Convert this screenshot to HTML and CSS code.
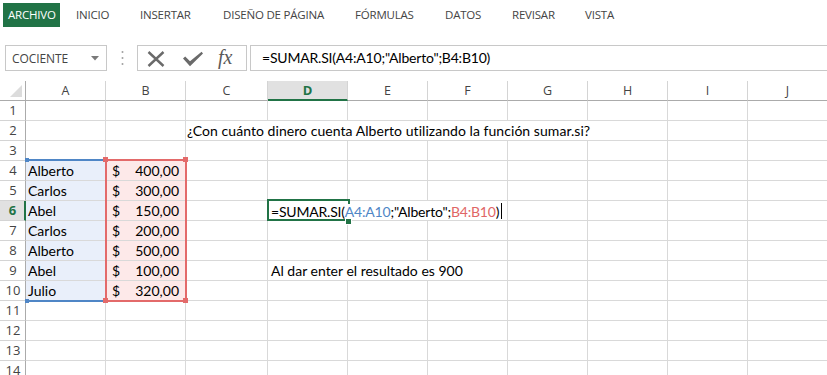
FILE: index.html
```html
<!DOCTYPE html>
<html lang="es">
<head>
<meta charset="utf-8">
<title>Excel - SUMAR.SI</title>
<link rel="stylesheet" href="styles.css">
</head>
<body>
<div class="tabs">
  <span class="tab"><span class="active">ARCHIVO</span></span>
  <span class="tab">INICIO</span>
  <span class="tab">INSERTAR</span>
  <span class="tab">DISEÑO DE PÁGINA</span>
  <span class="tab">FÓRMULAS</span>
  <span class="tab">DATOS</span>
  <span class="tab">REVISAR</span>
  <span class="tab">VISTA</span>
</div>

<div class="fbar">
  <div class="namebox">
    <span>COCIENTE</span>
    <svg class="dd" width="8" height="5" viewBox="0 0 8 5"><path d="M0 0H8L4 4.5Z" fill="#7a7a7a"/></svg>
  </div>
  <div class="sep">
    <svg width="3" height="16" viewBox="0 0 3 16"><circle cx="1.5" cy="2" r="1" fill="#a0a0a0"/><circle cx="1.5" cy="8" r="1" fill="#a0a0a0"/><circle cx="1.5" cy="14" r="1" fill="#a0a0a0"/></svg>
  </div>
  <div class="fxbtns">
    <svg class="ico-x" width="18" height="16" viewBox="0 0 18 16"><path d="M1.5 1L16.5 15M16.5 1L1.5 15" stroke="#6a6a6a" stroke-width="2.4" fill="none"/></svg>
    <svg class="ico-ok" width="22" height="16" viewBox="0 0 22 16"><path d="M1 7.5L3.2 5.6L8 10.2L19.6 0.8L21 2.4L8 15.2Z" fill="#6a6a6a"/></svg>
    <span class="fx">fx</span>
  </div>
  <div class="finput">=SUMAR.SI(A4:A10;"Alberto";B4:B10)</div>
</div>

<div class="sheet">
  <div class="c corner"><svg width="12" height="12" viewBox="0 0 12 12"><path d="M12 0V12H0Z" fill="#dcdcdc"/></svg></div>
  <div class="c ch">A</div>
  <div class="c ch">B</div>
  <div class="c ch">C</div>
  <div class="c ch sel">D</div>
  <div class="c ch">E</div>
  <div class="c ch">F</div>
  <div class="c ch">G</div>
  <div class="c ch">H</div>
  <div class="c ch">I</div>
  <div class="c ch">J</div>

  <div class="c rh">1</div>
  <div class="c"></div><div class="c"></div><div class="c"></div><div class="c"></div><div class="c"></div><div class="c"></div><div class="c"></div><div class="c"></div><div class="c"></div><div class="c"></div>

  <div class="c rh">2</div>
  <div class="c"></div><div class="c"></div>
  <div class="c t span6 q">¿Con cuánto dinero cuenta Alberto utilizando la función sumar.si?</div>
  <div class="c"></div><div class="c"></div>

  <div class="c rh">3</div>
  <div class="c"></div><div class="c"></div><div class="c"></div><div class="c"></div><div class="c"></div><div class="c"></div><div class="c"></div><div class="c"></div><div class="c"></div><div class="c"></div>

  <div class="c rh">4</div>
  <div class="c t a">Alberto</div>
  <div class="c b"><span>$</span><span>400,00</span></div>
  <div class="c"></div><div class="c"></div><div class="c"></div><div class="c"></div><div class="c"></div><div class="c"></div><div class="c"></div><div class="c"></div>

  <div class="c rh">5</div>
  <div class="c t a">Carlos</div>
  <div class="c b"><span>$</span><span>300,00</span></div>
  <div class="c"></div><div class="c"></div><div class="c"></div><div class="c"></div><div class="c"></div><div class="c"></div><div class="c"></div><div class="c"></div>

  <div class="c rh sel">6</div>
  <div class="c t a">Abel</div>
  <div class="c b"><span>$</span><span>150,00</span></div>
  <div class="c"></div>
  <div class="c span3 edit"><span class="etext">=SUMAR.SI(<span class="rb">A4:A10</span>;"Alberto";<span class="rr">B4:B10</span>)</span><span class="caret"></span></div>
  <div class="c"></div><div class="c"></div><div class="c"></div><div class="c"></div>

  <div class="c rh">7</div>
  <div class="c t a">Carlos</div>
  <div class="c b"><span>$</span><span>200,00</span></div>
  <div class="c"></div><div class="c"></div><div class="c"></div><div class="c"></div><div class="c"></div><div class="c"></div><div class="c"></div><div class="c"></div>

  <div class="c rh">8</div>
  <div class="c t a">Alberto</div>
  <div class="c b"><span>$</span><span>500,00</span></div>
  <div class="c"></div><div class="c"></div><div class="c"></div><div class="c"></div><div class="c"></div><div class="c"></div><div class="c"></div><div class="c"></div>

  <div class="c rh">9</div>
  <div class="c t a">Abel</div>
  <div class="c b"><span>$</span><span>100,00</span></div>
  <div class="c"></div>
  <div class="c t span3 r9">Al dar enter el resultado es 900</div>
  <div class="c"></div><div class="c"></div><div class="c"></div><div class="c"></div>

  <div class="c rh">10</div>
  <div class="c t a">Julio</div>
  <div class="c b"><span>$</span><span>320,00</span></div>
  <div class="c"></div><div class="c"></div><div class="c"></div><div class="c"></div><div class="c"></div><div class="c"></div><div class="c"></div><div class="c"></div>

  <div class="c rh">11</div>
  <div class="c"></div><div class="c"></div><div class="c"></div><div class="c"></div><div class="c"></div><div class="c"></div><div class="c"></div><div class="c"></div><div class="c"></div><div class="c"></div>

  <div class="c rh">12</div>
  <div class="c"></div><div class="c"></div><div class="c"></div><div class="c"></div><div class="c"></div><div class="c"></div><div class="c"></div><div class="c"></div><div class="c"></div><div class="c"></div>

  <div class="c rh">13</div>
  <div class="c"></div><div class="c"></div><div class="c"></div><div class="c"></div><div class="c"></div><div class="c"></div><div class="c"></div><div class="c"></div><div class="c"></div><div class="c"></div>

  <div class="c rh">14</div>
  <div class="c"></div><div class="c"></div><div class="c"></div><div class="c"></div><div class="c"></div><div class="c"></div><div class="c"></div><div class="c"></div><div class="c"></div><div class="c"></div>

  <div class="range-a"></div>
  <div class="hb hb-a1"></div>
  <div class="hb hb-a2"></div>
  <div class="range-b"></div>
  <div class="hr hr1"></div>
  <div class="hr hr2"></div>
  <div class="hr hr3"></div>
  <div class="hr hr4"></div>
  <div class="cursel"></div>
  <div class="fill"></div>
</div>
</body>
</html>
```

FILE: styles.css
```css
* { box-sizing: border-box; }
html, body { margin: 0; padding: 0; background: #fff; }
body {
  width: 827px;
  height: 375px;
  overflow: hidden;
  font-family: "Open Sans", "Noto Sans", sans-serif;
  color: #444;
}

/* ribbon tabs */
.tabs {
  display: grid;
  grid-template-columns: 68px 64px 83px 132px 90px 67px 73px 60px;
  padding: 3px 0 0 3px;
  height: 27px;
  font-size: 11.5px;
  align-items: center;
}
.tab {
  padding-left: 5px;
  line-height: 24px;
  white-space: nowrap;
  letter-spacing: -0.2px;
}
.tab:first-child { padding-left: 0; }
.active {
  display: inline-block;
  background: #217346;
  color: #fff;
  padding: 0 4px 0 5px;
  height: 24px;
  line-height: 24px;
}

/* formula bar */
.fbar {
  display: flex;
  margin-top: 18px;
  height: 26px;
}
.namebox {
  margin-left: 5px;
  width: 102px;
  border: 1px solid #c8c8c8;
  display: flex;
  align-items: center;
  justify-content: space-between;
  padding: 0 7px 0 6px;
  font-size: 12px;
  letter-spacing: -0.1px;
}
.dd { margin-top: 1px; }
.sep {
  width: 30px;
  display: flex;
  align-items: center;
  justify-content: center;
}
.fxbtns {
  width: 110px;
  border: 1px solid #c8c8c8;
  display: flex;
  align-items: center;
  padding: 0 0 0 9px;
}
.ico-x { margin-top: 1px; }
.ico-ok { margin-left: 17px; margin-top: 1px; }
.fx {
  margin-left: 14px;
  font-family: "Liberation Serif", "DejaVu Serif", serif;
  font-style: italic;
  font-size: 20px;
  color: #5a5a5a;
  line-height: 20px;
  margin-top: -2px;
}
.finput {
  flex: 1;
  margin-left: 3px;
  border-top: 1px solid #c8c8c8;
  border-bottom: 1px solid #c8c8c8;
  border-left: 1px solid #c8c8c8;
  padding-left: 11px;
  font-family: "Lato", "Liberation Sans", sans-serif;
  font-size: 14px;
  letter-spacing: -0.2px;
  line-height: 24px;
  color: #000;
  white-space: nowrap;
}

/* sheet grid */
.sheet {
  position: relative;
  margin-top: 10px;
  display: grid;
  grid-template-columns: 26px 80px 80px 82px 80px 80px 80px 80px 80px 80px 80px;
  grid-auto-rows: 20px;
  width: 828px;
  font-family: "Lato", "Liberation Sans", sans-serif;
  font-size: 14px;
  color: #000;
}
.c {
  border-right: 1px solid #d9d9d9;
  border-bottom: 1px solid #d9d9d9;
  line-height: 19px;
  white-space: nowrap;
  min-width: 0;
}
.corner {
  border-right: 1px solid #ababab;
  border-bottom: 1px solid #ababab;
  display: flex;
  align-items: flex-end;
  justify-content: flex-end;
  padding: 0 3px 3px 0;
}
.ch {
  border-bottom: 1px solid #ababab;
  border-right: 1px solid #d4d4d4;
  text-align: center;
  font-family: "Open Sans", "Noto Sans", sans-serif;
  font-size: 12.5px;
  color: #444;
  line-height: 19px;
}
.ch.sel {
  background: #e1e1e1;
  color: #217346;
  font-weight: bold;
  font-size: 13px;
  border-bottom: 2px solid #217346;
}
.rh {
  border-right: 1px solid #ababab;
  border-bottom: 1px solid #d4d4d4;
  text-align: center;
  font-family: "Open Sans", "Noto Sans", sans-serif;
  font-size: 13px;
  color: #444;
  padding-left: 1px;
}
.rh.sel {
  background: #e1e1e1;
  color: #217346;
  font-weight: bold;
  border-right: 2px solid #217346;
}
.t { padding-left: 2px; }
.q { padding-left: 1px; letter-spacing: 0.05px; }
.a { background: #e9effa; }
.b {
  background: #fde9e9;
  display: flex;
  justify-content: space-between;
  padding: 0 6px 0 6px;
}
.span6 { grid-column: span 6; }
.span3 { grid-column: span 3; }
.edit {
  position: relative;
  padding-left: 3px;
  display: flex;
  align-items: center;
}
.etext {
  position: relative;
  z-index: 3;
  background: #fff;
  line-height: 15px;
  margin-top: 1px;
  letter-spacing: -0.2px;
}
.rb { color: #4f86c6; }
.rr { color: #e06666; }
.caret {
  display: inline-block;
  width: 1px;
  height: 16px;
  background: #000;
  margin-left: 2px;
  position: relative;
  z-index: 3;
}
.r9 { padding-left: 3px; }

/* reference highlights and selection overlays */
.range-a {
  position: absolute;
  left: 26px;
  top: 78px;
  width: 80px;
  height: 143px;
  border-top: 2px solid #4f86c6;
  border-bottom: 2px solid #4f86c6;
  z-index: 2;
}
.hb {
  position: absolute;
  width: 4px;
  height: 4px;
  background: #4f86c6;
  z-index: 2;
}
.hb-a1 { left: 25px; top: 77px; }
.hb-a2 { left: 25px; top: 218px; }
.range-b {
  position: absolute;
  left: 105px;
  top: 78px;
  width: 82px;
  height: 143px;
  border: 2px solid #e36a6a;
  z-index: 2;
}
.hr {
  position: absolute;
  width: 5px;
  height: 5px;
  background: #e36a6a;
  z-index: 2;
}
.hr1 { left: 103px; top: 76px; }
.hr2 { left: 183px; top: 76px; }
.hr3 { left: 103px; top: 217px; }
.hr4 { left: 183px; top: 217px; }
.cursel {
  position: absolute;
  left: 267px;
  top: 118px;
  width: 83px;
  height: 22px;
  border: 2px solid #217346;
  z-index: 2;
}
.fill {
  position: absolute;
  left: 345px;
  top: 137px;
  width: 5px;
  height: 5px;
  background: #217346;
  border: 1px solid #fff;
  box-sizing: content-box;
  z-index: 4;
}
```
